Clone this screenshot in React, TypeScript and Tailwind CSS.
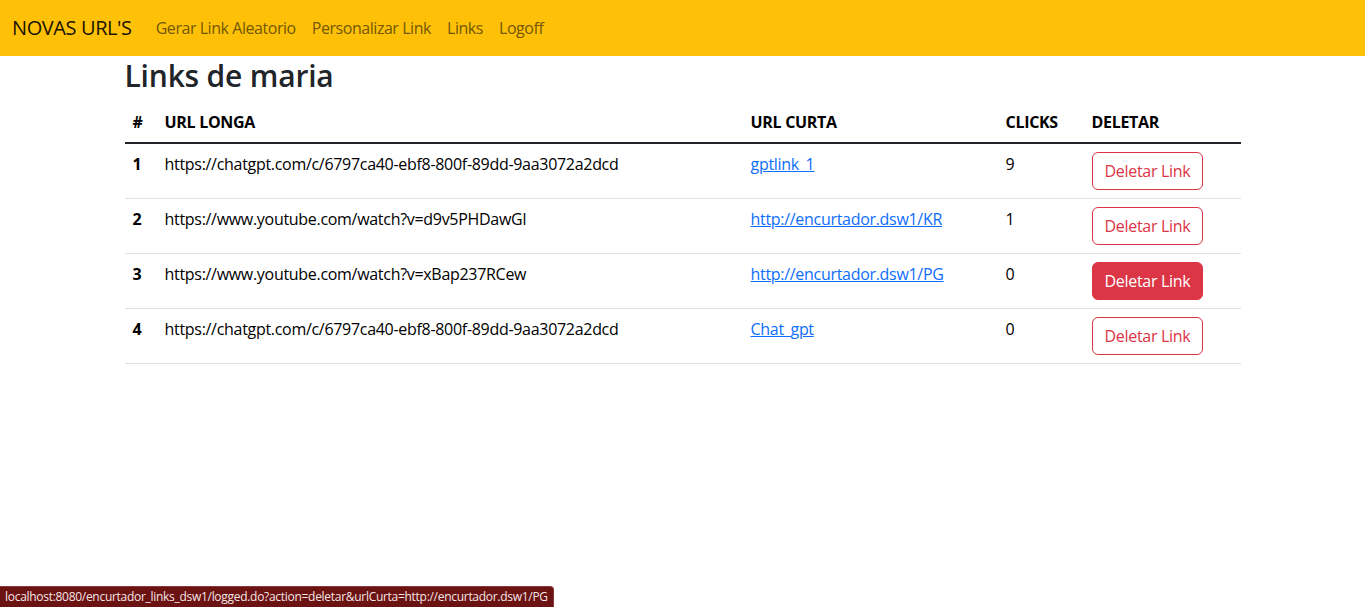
import React from 'react'

interface LinkRow {
  id: number
  longUrl: string
  shortUrl: string
  clicks: number
  hovered?: boolean
}

const links: LinkRow[] = [
  { id: 1, longUrl: 'https://chatgpt.com/c/6797ca40-ebf8-800f-89dd-9aa3072a2dcd', shortUrl: 'gptlink_1', clicks: 9 },
  { id: 2, longUrl: 'https://www.youtube.com/watch?v=d9v5PHDawGI', shortUrl: 'http://encurtador.dsw1/KR', clicks: 1 },
  { id: 3, longUrl: 'https://www.youtube.com/watch?v=xBap237RCew', shortUrl: 'http://encurtador.dsw1/PG', clicks: 0, hovered: true },
  { id: 4, longUrl: 'https://chatgpt.com/c/6797ca40-ebf8-800f-89dd-9aa3072a2dcd', shortUrl: 'Chat_gpt', clicks: 0 },
]

const navItems = ['Gerar Link Aleatorio', 'Personalizar Link', 'Links', 'Logoff']

export default function App() {
  return (
    <div className="min-h-[607px] bg-white text-[#212529] font-['Open_Sans',sans-serif] text-base tracking-[-0.3px]">
      <nav className="flex h-14 items-center bg-[#ffc107] px-3">
        <a href="#" className="mr-4 py-[5px] text-xl leading-[30px] tracking-[-0.4px] text-[#1a1301]">
          NOVAS URL'S
        </a>
        <ul className="flex tracking-[-0.45px]">
          {navItems.map((item) => (
            <li key={item}>
              <a href="#" className="block px-2 py-2 leading-6 text-[#735703]">
                {item}
              </a>
            </li>
          ))}
        </ul>
      </nav>

      <main className="mx-auto w-[1140px] px-3">
        <h2 className="mb-2 pt-[2px] text-[30px] font-semibold leading-[36px] tracking-[-0.2px]">Links de maria</h2>
        <table className="w-full table-fixed border-collapse text-left">
          <thead>
            <tr className="border-b-2 border-[#212529]">
              <th className="w-8 p-2 leading-6 font-bold text-black">#</th>
              <th className="w-[586px] p-2 leading-6 font-bold text-black">URL LONGA</th>
              <th className="w-[255px] p-2 leading-6 font-bold text-black">URL CURTA</th>
              <th className="w-[86px] p-2 leading-6 font-bold text-black">CLICKS</th>
              <th className="p-2 leading-6 font-bold text-black">DELETAR</th>
            </tr>
          </thead>
          <tbody>
            {links.map((link) => (
              <tr key={link.id} className="border-b border-[#dee2e6] align-top">
                <th className="p-2 leading-6 font-bold text-black">{link.id}</th>
                <td className="p-2 leading-6 text-black">{link.longUrl}</td>
                <td className="p-2 leading-6">
                  <a href="#" className="text-[#0d6efd] underline">
                    {link.shortUrl}
                  </a>
                </td>
                <td className="p-2 leading-6 text-black">{link.clicks}</td>
                <td className="p-2 leading-6">
                  <button
                    type="button"
                    className={
                      link.hovered
                        ? 'rounded-md border border-[#dc3545] bg-[#dc3545] px-3 py-[6px] leading-6 text-white'
                        : 'rounded-md border border-[#dc3545] bg-white px-3 py-[6px] leading-6 text-[#dc3545]'
                    }
                  >
                    Deletar Link
                  </button>
                </td>
              </tr>
            ))}
          </tbody>
        </table>
      </main>

      <div className="fixed bottom-0 left-0 h-[21px] rounded-tr-[4px] border-t border-r border-[#8a3a3a] bg-[#6b1212] px-[5px] text-xs leading-[20px] tracking-[-0.29px] text-[#f3e6e6]">
        localhost:8080/encurtador_links_dsw1/logged.do?action=deletar&amp;urlCurta=http://encurtador.dsw1/PG
      </div>
    </div>
  )
}
